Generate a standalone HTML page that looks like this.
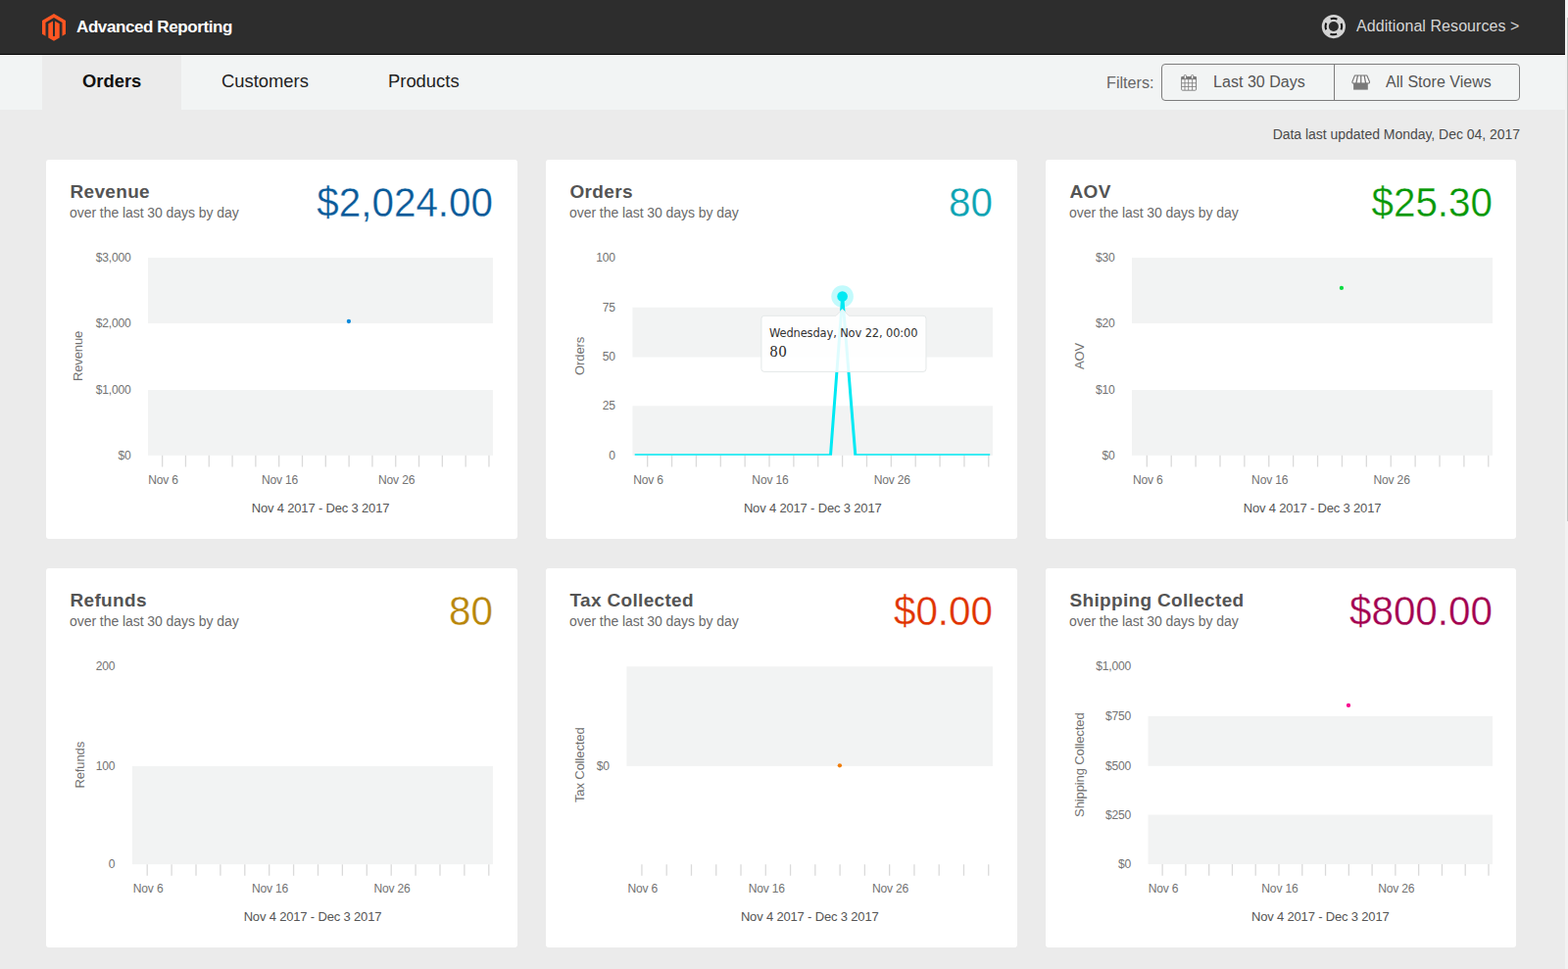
<!DOCTYPE html>
<html lang="en">
<head>
<meta charset="utf-8">
<title>Advanced Reporting</title>
<style>
html,body{margin:0;padding:0}
body{width:1600px;height:989px;overflow:hidden;position:relative;background:#ebebeb;font-family:"Liberation Sans", sans-serif;color:#333}
.hdr{position:absolute;left:0;top:0;width:1597px;height:55px;background:#2d2d2d;border-bottom:1px solid #040404}
.logo{position:absolute;left:43px;top:14px;width:24px;height:27.7px}
.brand{position:absolute;left:78px;top:17.5px;font-size:17px;line-height:20px;font-weight:bold;color:#fff;white-space:nowrap;letter-spacing:-0.4px}
.res{position:absolute;left:1384px;top:17px;font-size:16px;line-height:20px;color:#d6d6d6;white-space:nowrap;letter-spacing:0.07px}
.ring{position:absolute;left:1348px;top:14px;width:26px;height:26px}
.tabs{position:absolute;left:0;top:56px;width:1597px;height:56px;background:#f2f4f4}
.tab{position:absolute;top:0;height:56px;line-height:54px;font-size:18.4px;color:#222;white-space:nowrap}
.tab.on{left:43px;width:142px;background:#ebebeb;font-weight:bold;color:#111}
.tab.on span{position:absolute;left:41px}
.flt{position:absolute;left:1129px;top:18px;font-size:16.2px;line-height:20px;color:#666;white-space:nowrap}
.btns{position:absolute;left:1185px;top:9px;width:364px;height:36px;border:1px solid #7d7d7d;border-radius:4px}
.btns i{position:absolute;left:175px;top:0;width:1px;height:36px;background:#7d7d7d}
.btns span{position:absolute;top:8.3px;font-size:16px;letter-spacing:0.04px;line-height:20px;color:#555;white-space:nowrap}
.btns svg{position:absolute}
.upd{position:absolute;right:49px;top:128px;font-size:14px;line-height:18px;color:#4a4a4a;white-space:nowrap;letter-spacing:-0.03px}
.sb{position:absolute;left:1597px;top:0;width:3px;height:989px;background:#f2f2f2}
.sb i{position:absolute;left:2px;top:18px;width:1px;height:514px;background:#c2c4c3}
.card{position:absolute;width:481px;height:387px;background:#fff;border-radius:3px}
.card h2{position:absolute;left:24.5px;top:22px;margin:0;font-size:19px;line-height:22px;font-weight:bold;color:#545454;white-space:nowrap;letter-spacing:0.33px}
.card p{position:absolute;left:24px;top:45.3px;margin:0;font-size:14px;line-height:18px;color:#6a6a6a;white-space:nowrap;letter-spacing:-0.06px}
.card .val{position:absolute;left:0;width:456px;text-align:right;top:20.5px;font-size:40.4px;line-height:46px;white-space:nowrap;transform:scaleY(1.06);transform-origin:100% 37px;-webkit-text-stroke:0.3px #fff}
.ch{position:absolute;left:0;top:0}
.ax{font-family:"Liberation Sans", sans-serif;font-size:12.1px;letter-spacing:-0.2px;fill:#737373}
.tt{font-family:"Liberation Sans", sans-serif;font-size:13px;letter-spacing:-0.17px;fill:#555}
.yt{font-family:"Liberation Sans", sans-serif;font-size:13px;letter-spacing:-0.11px;fill:#707070}
.tip1{font-family:"DejaVu Sans","Liberation Sans",sans-serif;font-size:11.45px;letter-spacing:-0.12px;fill:#333}
.tip2{font-family:"Liberation Serif","DejaVu Serif",serif;font-size:16.2px;letter-spacing:0.7px;fill:#2a2a2a}
</style>
</head>
<body>
<div class="hdr">
<svg class="logo" viewBox="0 0 24 27.7"><path fill="#ff5622" d="M24 6.93v13.86l-3.5 2.02V8.95L12 4.05 3.5 8.95v13.86L0 20.79V6.93L12 0z"/><path fill="#ff5622" d="M12 27.7l-5.700 -3.290V10.300l4.700 -2.710v15.110l1 0.580 1 -0.580V7.590l4.700 2.710v14.110z"/></svg>
<div class="brand">Advanced Reporting</div>
<svg class="ring" viewBox="0 0 26 26"><circle cx="12.85" cy="13.05" r="12.1" fill="#d3d3d3"/><circle cx="12.85" cy="13.05" r="5" fill="#2b2b2b"/><circle cx="12.850" cy="13.050" r="8.300" fill="none" stroke="#101010" stroke-width="2" stroke-dasharray="6.900 6.138" stroke-dashoffset="3.450"/></svg>
<div class="res">Additional Resources &gt;</div>
</div>
<div class="tabs">
<div class="tab on"><span>Orders</span></div>
<div class="tab" style="left:226px">Customers</div>
<div class="tab" style="left:396px">Products</div>
<div class="flt">Filters:</div>
<div class="btns"><i></i>
<svg style="left:19px;top:10px" width="17" height="18" viewBox="0 0 17 18"><rect x="0.650" y="2.500" width="14.900" height="13.700" rx="1" fill="#fbfbfb" stroke="#787878" stroke-width="0.9"/><rect x="0.400" y="2.200" width="15.400" height="3" fill="#787878"/><path d="M4 5v11M7.700 5v11M11.600 5v11M0.600 8.800h15M0.600 12.400h15" stroke="#808080" stroke-width="0.9" fill="none"/><rect x="3.200" y="0.500" width="2.300" height="4" rx="1.100" fill="#f4f4f4" stroke="#787878" stroke-width="0.9"/><rect x="10.500" y="0.500" width="2.300" height="4" rx="1.100" fill="#f4f4f4" stroke="#787878" stroke-width="0.9"/></svg>
<span style="left:52px">Last 30 Days</span>
<svg style="left:193px;top:10px" width="20" height="17" viewBox="0 0 20 17"><path d="M3.500 0.950h12.300l2.700 6.500q0.100 1.500 -1.200 1.500h-15.200q-1.300 0 -1.200 -1.500z" fill="#fbfbfb" stroke="#757575" stroke-width="1.1" stroke-linejoin="round"/><path d="M6.400 1l-1.500 8M9.750 1v8M13.100 1l1.500 8" stroke="#757575" stroke-width="1.300" fill="none"/><rect x="2.100" y="8.900" width="14.700" height="6.700" fill="#7a7a7a"/></svg>
<span style="left:228px">All Store Views</span>
</div>
</div>
<div class="upd">Data last updated Monday, Dec 04, 2017</div>

<div class="card" style="left:47px;top:163px">
<h2>Revenue</h2>
<p>over the last 30 days by day</p>
<div class="val" style="color:#0a5a99">$2,024.00</div>
<svg class="ch" width="480" height="386" viewBox="0 0 480 386">
<rect x="104" y="100" width="352" height="67" fill="#f2f3f3"/>
<rect x="104" y="235" width="352" height="66.8" fill="#f2f3f3"/>
<path d="M118.64 301.8v11.6M142.45 301.8v11.6M166.26 301.8v11.6M190.07 301.8v11.6M213.88 301.8v11.6M237.69 301.8v11.6M261.5 301.8v11.6M285.31 301.8v11.6M309.12 301.8v11.6M332.93 301.8v11.6M356.74 301.8v11.6M380.55 301.8v11.6M404.35 301.8v11.6M428.16 301.8v11.6M451.97 301.8v11.6" stroke="#dadada" stroke-width="1.3" fill="none"/>
<g class="ax" text-anchor="end">
<text x="86.5" y="104">$3,000</text>
<text x="86.5" y="171">$2,000</text>
<text x="86.5" y="239">$1,000</text>
<text x="86.5" y="306">$0</text>
</g>
<g class="ax" text-anchor="middle">
<text x="119.54" y="331">Nov 6</text>
<text x="238.59" y="331">Nov 16</text>
<text x="357.64" y="331">Nov 26</text>
</g>
<text class="tt" text-anchor="middle" x="280" y="360">Nov 4 2017 - Dec 3 2017</text>
<text class="yt" text-anchor="middle" transform="translate(37 200.4) rotate(-90)">Revenue</text>
<circle cx="308.9" cy="165" r="2.15" fill="#0a8adc"/>
</svg>
</div>
<div class="card" style="left:557px;top:163px">
<h2>Orders</h2>
<p>over the last 30 days by day</p>
<div class="val" style="color:#0da3b3">80</div>
<svg class="ch" width="480" height="386" viewBox="0 0 480 386">
<rect x="88.4" y="150.7" width="367.6" height="50.8" fill="#f2f3f3"/>
<rect x="88.4" y="251.3" width="367.6" height="50.5" fill="#f2f3f3"/>
<path d="M103.69 301.8v11.6M128.56 301.8v11.6M153.42 301.8v11.6M178.29 301.8v11.6M203.15 301.8v11.6M228.01 301.8v11.6M252.88 301.8v11.6M277.74 301.8v11.6M302.61 301.8v11.6M327.47 301.8v11.6M352.34 301.8v11.6M377.2 301.8v11.6M402.07 301.8v11.6M426.93 301.8v11.6M451.79 301.8v11.6" stroke="#dadada" stroke-width="1.3" fill="none"/>
<g class="ax" text-anchor="end">
<text x="70.9" y="104">100</text>
<text x="70.9" y="155">75</text>
<text x="70.9" y="205">50</text>
<text x="70.9" y="255">25</text>
<text x="70.9" y="306">0</text>
</g>
<g class="ax" text-anchor="middle">
<text x="104.59" y="331">Nov 6</text>
<text x="228.91" y="331">Nov 16</text>
<text x="353.24" y="331">Nov 26</text>
</g>
<text class="tt" text-anchor="middle" x="272.2" y="360">Nov 4 2017 - Dec 3 2017</text>
<text class="yt" text-anchor="middle" transform="translate(38.5 200.4) rotate(-90)">Orders</text>
<clipPath id="cp"><rect x="88.4" y="20" width="367.6" height="281.8"/></clipPath><path clip-path="url(#cp)" d="M90.7 301.8L290.47 301.8L302.7 139.5L315.83 301.8L453.2 301.8" fill="none" stroke="#00e9f3" stroke-width="3" stroke-linejoin="round" stroke-linecap="butt"/><circle cx="302.6" cy="139.5" r="11.3" fill="#00e9f3" fill-opacity="0.24"/><circle cx="302.6" cy="139.5" r="5.3" fill="#00e9f3"/><path d="M222.9 159.25h73.2l6.5 -6.65l6.5 6.65h75.9a3 3 0 0 1 3 3v51.15a3 3 0 0 1 -3 3h-162.1a3 3 0 0 1 -3 -3v-51.15a3 3 0 0 1 3 -3z" fill="#ffffff" fill-opacity="0.87" stroke="#e4e8e8" stroke-width="1"/><text class="tip1" x="228" y="180.9">Wednesday, Nov 22, 00:00</text><text class="tip2" x="228.6" y="200.9">80</text>
</svg>
</div>
<div class="card" style="left:1067px;top:163px;width:480px">
<h2>AOV</h2>
<p>over the last 30 days by day</p>
<div class="val" style="color:#089808">$25.30</div>
<svg class="ch" width="480" height="386" viewBox="0 0 480 386">
<rect x="88" y="100" width="368" height="67" fill="#f2f3f3"/>
<rect x="88" y="235" width="368" height="66.8" fill="#f2f3f3"/>
<path d="M103.31 301.8v11.6M128.2 301.8v11.6M153.09 301.8v11.6M177.98 301.8v11.6M202.87 301.8v11.6M227.77 301.8v11.6M252.66 301.8v11.6M277.55 301.8v11.6M302.44 301.8v11.6M327.33 301.8v11.6M352.22 301.8v11.6M377.12 301.8v11.6M402.01 301.8v11.6M426.9 301.8v11.6M451.79 301.8v11.6" stroke="#dadada" stroke-width="1.3" fill="none"/>
<g class="ax" text-anchor="end">
<text x="70.5" y="104">$30</text>
<text x="70.5" y="171">$20</text>
<text x="70.5" y="239">$10</text>
<text x="70.5" y="306">$0</text>
</g>
<g class="ax" text-anchor="middle">
<text x="104.21" y="331">Nov 6</text>
<text x="228.67" y="331">Nov 16</text>
<text x="353.12" y="331">Nov 26</text>
</g>
<text class="tt" text-anchor="middle" x="272" y="360">Nov 4 2017 - Dec 3 2017</text>
<text class="yt" text-anchor="middle" transform="translate(38.5 200.4) rotate(-90)">AOV</text>
<circle cx="301.9" cy="130.9" r="2.15" fill="#08dc40"/>
</svg>
</div>
<div class="card" style="left:47px;top:580px">
<h2>Refunds</h2>
<p>over the last 30 days by day</p>
<div class="val" style="color:#b8860b">80</div>
<svg class="ch" width="480" height="386" viewBox="0 0 480 386">
<rect x="87.9" y="201.9" width="368.1" height="100.3" fill="#f2f3f3"/>
<path d="M103.21 302.2v11.6M128.11 302.2v11.6M153.01 302.2v11.6M177.91 302.2v11.6M202.81 302.2v11.6M227.7 302.2v11.6M252.6 302.2v11.6M277.5 302.2v11.6M302.4 302.2v11.6M327.3 302.2v11.6M352.2 302.2v11.6M377.09 302.2v11.6M401.99 302.2v11.6M426.89 302.2v11.6M451.79 302.2v11.6" stroke="#dadada" stroke-width="1.3" fill="none"/>
<g class="ax" text-anchor="end">
<text x="70.4" y="104">200</text>
<text x="70.4" y="206">100</text>
<text x="70.4" y="306">0</text>
</g>
<g class="ax" text-anchor="middle">
<text x="104.11" y="331">Nov 6</text>
<text x="228.6" y="331">Nov 16</text>
<text x="353.1" y="331">Nov 26</text>
</g>
<text class="tt" text-anchor="middle" x="271.95" y="360">Nov 4 2017 - Dec 3 2017</text>
<text class="yt" text-anchor="middle" transform="translate(38.5 200.75) rotate(-90)">Refunds</text>

</svg>
</div>
<div class="card" style="left:557px;top:580px">
<h2>Tax Collected</h2>
<p>over the last 30 days by day</p>
<div class="val" style="color:#e03300">$0.00</div>
<svg class="ch" width="480" height="386" viewBox="0 0 480 386">
<rect x="82.4" y="100.3" width="373.6" height="101.6" fill="#f2f3f3"/>
<path d="M97.94 302.2v11.6M123.21 302.2v11.6M148.48 302.2v11.6M173.75 302.2v11.6M199.02 302.2v11.6M224.29 302.2v11.6M249.56 302.2v11.6M274.83 302.2v11.6M300.1 302.2v11.6M325.37 302.2v11.6M350.64 302.2v11.6M375.92 302.2v11.6M401.19 302.2v11.6M426.46 302.2v11.6M451.73 302.2v11.6" stroke="#dadada" stroke-width="1.3" fill="none"/>
<g class="ax" text-anchor="end">
<text x="64.9" y="206">$0</text>
</g>
<g class="ax" text-anchor="middle">
<text x="98.84" y="331">Nov 6</text>
<text x="225.19" y="331">Nov 16</text>
<text x="351.54" y="331">Nov 26</text>
</g>
<text class="tt" text-anchor="middle" x="269.2" y="360">Nov 4 2017 - Dec 3 2017</text>
<text class="yt" text-anchor="middle" transform="translate(38.5 200.75) rotate(-90)">Tax Collected</text>
<circle cx="299.9" cy="201.3" r="2.15" fill="#f07c08"/>
</svg>
</div>
<div class="card" style="left:1067px;top:580px;width:480px">
<h2>Shipping Collected</h2>
<p>over the last 30 days by day</p>
<div class="val" style="color:#a30050">$800.00</div>
<svg class="ch" width="480" height="386" viewBox="0 0 480 386">
<rect x="104.5" y="151" width="351.5" height="50.8" fill="#f2f3f3"/>
<rect x="104.5" y="251.6" width="351.5" height="50.5" fill="#f2f3f3"/>
<path d="M119.12 302.1v11.6M142.9 302.1v11.6M166.67 302.1v11.6M190.45 302.1v11.6M214.22 302.1v11.6M238 302.1v11.6M261.78 302.1v11.6M285.55 302.1v11.6M309.33 302.1v11.6M333.1 302.1v11.6M356.88 302.1v11.6M380.65 302.1v11.6M404.43 302.1v11.6M428.2 302.1v11.6M451.98 302.1v11.6" stroke="#dadada" stroke-width="1.3" fill="none"/>
<g class="ax" text-anchor="end">
<text x="87" y="104">$1,000</text>
<text x="87" y="155">$750</text>
<text x="87" y="206">$500</text>
<text x="87" y="256">$250</text>
<text x="87" y="306">$0</text>
</g>
<g class="ax" text-anchor="middle">
<text x="120.02" y="331">Nov 6</text>
<text x="238.9" y="331">Nov 16</text>
<text x="357.78" y="331">Nov 26</text>
</g>
<text class="tt" text-anchor="middle" x="280.25" y="360">Nov 4 2017 - Dec 3 2017</text>
<text class="yt" text-anchor="middle" transform="translate(38.5 200.7) rotate(-90)">Shipping Collected</text>
<circle cx="309" cy="139.9" r="2.15" fill="#f80890"/>
</svg>
</div>
<div class="sb"><i></i></div>
</body>
</html>
